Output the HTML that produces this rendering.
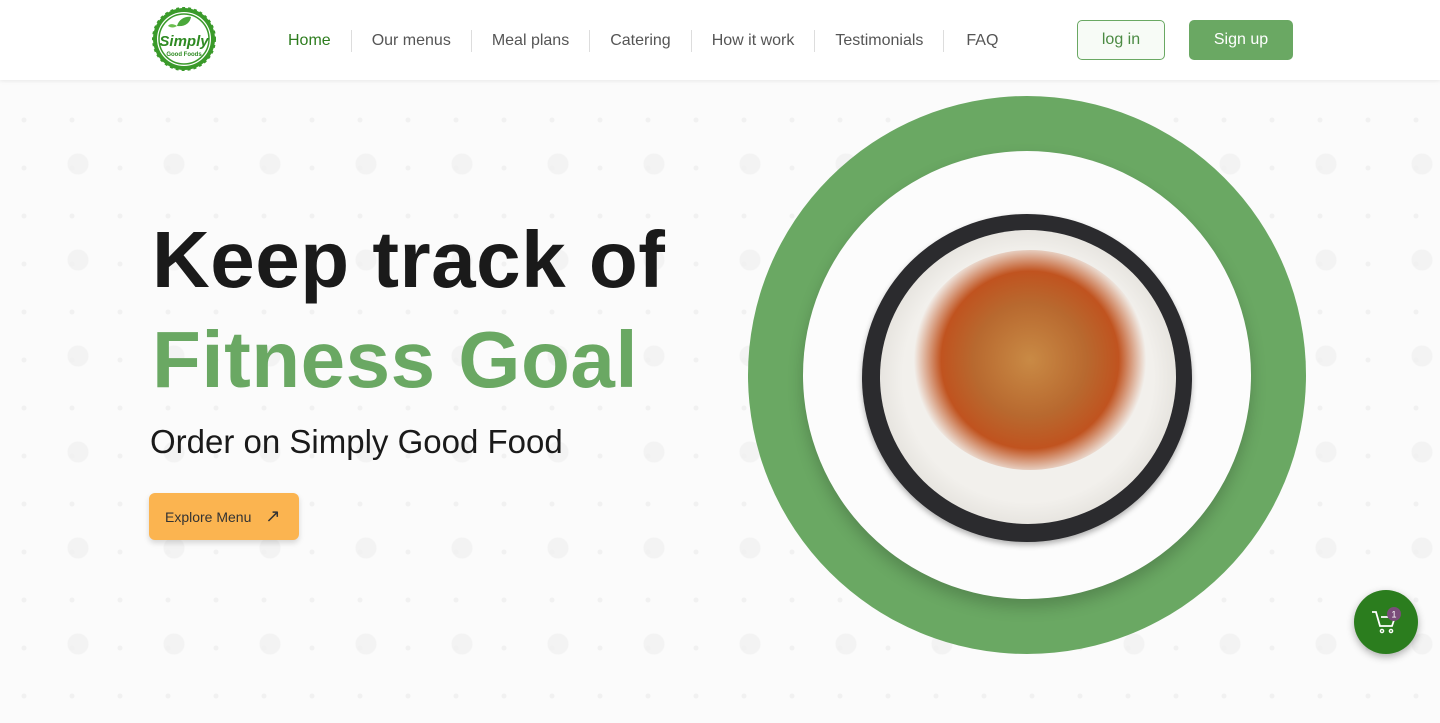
<!DOCTYPE html>
<html><head><meta charset="utf-8"><style>
*{margin:0;padding:0;box-sizing:border-box}
body{width:1440px;height:723px;overflow:hidden;font-family:"Liberation Sans",sans-serif;background:#fbfbfb;position:relative}
.hdr{position:absolute;left:0;top:0;width:1440px;height:80px;background:#fff;box-shadow:0 1px 4px rgba(0,0,0,.08);z-index:2}
.nav{position:absolute;top:30px;left:268px;display:flex;font-size:16px;color:#555}
.nav span{padding:0 20px;border-left:1px solid #ddd;line-height:22px}
.nav span:first-child{border:none;color:#2e7d1f}
.btn{position:absolute;top:20px;height:40px;border-radius:5px;font-size:16px;display:flex;align-items:center;justify-content:center}
h1{position:absolute;left:152px;font-size:80px;font-weight:bold;letter-spacing:0.5px}
.pat{position:absolute;inset:0;background-image:radial-gradient(circle,#f1f1f1 2px,transparent 3px),radial-gradient(circle,#f3f3f3 10px,transparent 11px);background-size:48px 48px,96px 96px;background-position:0 0,30px 20px}
</style></head><body>
<div class="pat"></div>
<div class="hdr">
<svg style="position:absolute;left:151px;top:6px" width="66" height="66" viewBox="0 0 66 66">
<circle cx="33" cy="33" r="31" fill="#3a9a2a" stroke="#3a9a2a" stroke-width="2" stroke-dasharray="3 3"/><circle cx="33" cy="33" r="27" fill="#fff"/><circle cx="33" cy="33" r="25" fill="none" stroke="#3a9a2a" stroke-width="1.5"/>
<path d="M26 20c2-8 10-10 14-9-1 6-6 10-14 9z" fill="#4aa83a"/><path d="M26 20c-4-3-8-2-9 0 3 2 6 2 9 0z" fill="#6cbf4f"/>
<text x="33" y="40" text-anchor="middle" font-size="15" font-weight="bold" font-style="italic" fill="#2e8a22">Simply</text>
<text x="33" y="50" text-anchor="middle" font-size="6" font-weight="bold" fill="#2e8a22">Good Foods</text>
</svg>
<div class="nav"><span>Home</span><span>Our menus</span><span>Meal plans</span><span>Catering</span><span>How it work</span><span>Testimonials</span><span style="padding-left:22px">FAQ</span></div>
<div class="btn" style="left:1077px;width:88px;border:1px solid #6aa863;color:#4b8a43;background:#f7fbf6">log in</div>
<div class="btn" style="left:1189px;width:104px;background:#6aa863;color:#fff">Sign up</div>
</div>
<h1 style="top:214px;color:#1a1a1a">Keep track of</h1>
<h1 style="top:314px;color:#6aa863">Fitness Goal</h1>
<div style="position:absolute;left:150px;top:423px;font-size:33px;color:#1a1a1a">Order on Simply Good Food</div>
<div style="position:absolute;left:149px;top:493px;width:150px;height:47px;background:#fbb450;border-radius:6px;box-shadow:0 3px 6px rgba(0,0,0,.15);font-size:14px;color:#333;display:flex;align-items:center;padding-left:16px">Explore Menu<span style="margin-left:14px;font-size:18px">↗</span></div>
<div style="position:absolute;left:748px;top:96px;width:558px;height:558px;border-radius:50%;background:#6aa863"></div>
<div style="position:absolute;left:803px;top:151px;width:448px;height:448px;border-radius:50%;background:#fcfcfc;box-shadow:0 8px 16px rgba(0,0,0,.2)"></div>
<div style="position:absolute;left:862px;top:214px;width:330px;height:328px;border-radius:50%;background:#2b2b2e;box-shadow:0 3px 6px rgba(0,0,0,.3)"></div>
<div style="position:absolute;left:880px;top:230px;width:296px;height:294px;border-radius:50%;background:radial-gradient(circle,#f2f0ec 60%,#d9d6d0 85%,#2b2b2e 100%)"></div>
<div style="position:absolute;left:912px;top:250px;width:236px;height:220px;border-radius:50%;background:radial-gradient(circle at 50% 50%,#c98a45 0,#b8692f 35%,#c0531f 55%,rgba(200,90,40,0) 72%)"></div>
<div style="position:absolute;left:1354px;top:590px;width:64px;height:64px;border-radius:50%;background:#2b7d1e;box-shadow:0 3px 8px rgba(0,0,0,.3)">
<svg width="64" height="64" viewBox="0 0 64 64"><path d="M18 22h4l4 14h12l3-9H27" fill="none" stroke="#fff" stroke-width="1.8"/><circle cx="28" cy="41" r="1.6" fill="none" stroke="#fff" stroke-width="1.4"/><circle cx="37" cy="41" r="1.6" fill="none" stroke="#fff" stroke-width="1.4"/><circle cx="40" cy="24" r="7" fill="#7a4d7a"/><text x="40" y="27.5" text-anchor="middle" font-size="9" fill="#fff">1</text></svg>
</div>
</body></html>
